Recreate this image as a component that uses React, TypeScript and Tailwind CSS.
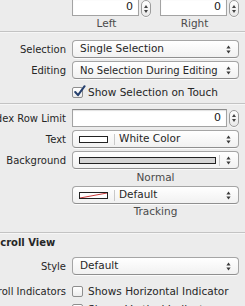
import React from "react";

function Arrows() {
  return (
    <svg width="5" height="9" viewBox="0 0 5 9" className="shrink-0">
      <path d="M2.5 0.5 L4.6 3.4 L0.4 3.4 Z" fill="#3a3a3a" />
      <path d="M2.5 8.5 L4.6 5.6 L0.4 5.6 Z" fill="#3a3a3a" />
    </svg>
  );
}

function Stepper() {
  return (
    <div className="flex h-[17px] w-[10px] shrink-0 flex-col items-center justify-center gap-[2px] rounded-full border border-[#9c9c9c] bg-gradient-to-b from-white to-[#e9e9e9] shadow-[0_1px_0_rgba(255,255,255,0.7)]">
      <svg width="4" height="3" viewBox="0 0 4 3">
        <path d="M2 0 L4 3 L0 3 Z" fill="#444" />
      </svg>
      <svg width="4" height="3" viewBox="0 0 4 3">
        <path d="M2 3 L4 0 L0 0 Z" fill="#444" />
      </svg>
    </div>
  );
}

function Field({ value }: { value: string }) {
  return (
    <div className="flex h-[18px] flex-1 items-center justify-end border border-[#a3a3a3] border-t-[#8c8c8c] bg-white pr-[5px] text-[11px] text-[#1a1a1a] shadow-[inset_0_1px_1px_rgba(0,0,0,0.12)]">
      {value}
    </div>
  );
}

function Popup({ children, arrowsLeftLine }: { children: React.ReactNode; arrowsLeftLine?: boolean }) {
  return (
    <div className="flex h-[18px] w-full items-center rounded-[4px] border border-[#a5a5a5] border-b-[#8f8f8f] bg-gradient-to-b from-white to-[#f1f1f1] pr-[7px] shadow-[0_1px_0_rgba(255,255,255,0.8)]">
      <div className="flex min-w-0 flex-1 items-center">{children}</div>
      {arrowsLeftLine && <div className="mr-[6px] h-[11px] w-px bg-[#c9c9c9]" />}
      <Arrows />
    </div>
  );
}

function Check({ checked }: { checked?: boolean }) {
  return (
    <div className="relative h-[11px] w-[11px] shrink-0 rounded-[2px] border border-[#8e8e8e] bg-gradient-to-b from-white to-[#ececec]">
      {checked && (
        <svg width="13" height="13" viewBox="0 0 13 13" className="absolute left-[0px] top-[-3px]">
          <path d="M2.2 7 L5 10.2 L11.6 1.2" fill="none" stroke="#26406e" strokeWidth="2" strokeLinecap="round" strokeLinejoin="round" />
        </svg>
      )}
    </div>
  );
}

function Row({ label, children, className = "" }: { label?: string; children: React.ReactNode; className?: string }) {
  return (
    <div className={`grid grid-cols-[66px_167px] items-center gap-x-[6px] ${className}`}>
      <div className="flex justify-end whitespace-nowrap text-[10px] text-[#262626]">{label}</div>
      <div className="flex items-center">{children}</div>
    </div>
  );
}

function Separator({ className = "" }: { className?: string }) {
  return <div className={`h-[2px] w-full border-t border-[#c3c3c3] border-b-0 bg-[#f6f6f6] ${className}`} />;
}

function Swatch({ wide, red }: { wide?: boolean; red?: boolean }) {
  return (
    <div
      className={`relative ml-[6px] h-[7px] shrink-0 overflow-hidden border border-[#222] ${
        wide ? "w-[137px] bg-[#d5d5d5]" : "w-[29px] bg-white"
      }`}
    >
      {red && (
        <svg width="27" height="5" viewBox="0 0 27 5" className="absolute left-0 top-0">
          <path d="M0 5 L27 0" stroke="#c83a3a" strokeWidth="1" />
        </svg>
      )}
    </div>
  );
}

export default function App() {
  return (
    <div
      className="h-[306px] w-[245px] overflow-hidden bg-[#ececec] text-[#262626]"
      style={{ fontFamily: '"DejaVu Sans", "Lucida Grande", sans-serif' }}
    >
      {/* inset fields: left / right */}
      <div className="mt-[-2px] grid h-[19px] grid-cols-[66px_167px] gap-x-[6px]">
        <div />
        <div className="flex">
          <div className="flex w-[79px] items-start gap-[2px]">
            <Field value="0" />
            <div className="mt-[2px]">
              <Stepper />
            </div>
          </div>
          <div className="ml-[9px] flex w-[79px] items-start gap-[2px]">
            <Field value="0" />
            <div className="mt-[2px]">
              <Stepper />
            </div>
          </div>
        </div>
      </div>
      <div className="grid h-[12px] grid-cols-[66px_167px] gap-x-[6px] text-[10.5px] leading-[12px] text-[#4a4a4a]">
        <div />
        <div className="flex">
          <div className="w-[69px] text-center">Left</div>
          <div className="ml-[19px] w-[69px] text-center">Right</div>
        </div>
      </div>

      <Separator className="mt-[2px]" />

      <Row label="Selection" className="mt-[7px] h-[18px]">
        <Popup>
          <span className="pl-[7px] text-[10.5px]">Single Selection</span>
        </Popup>
      </Row>
      <Row label="Editing" className="mt-[3px] h-[18px]">
        <Popup>
          <span className="whitespace-nowrap pl-[7px] text-[10px]">No Selection During Editing</span>
        </Popup>
      </Row>
      <Row className="mt-[6px] h-[14px]">
        <div className="flex items-center gap-[5px]">
          <Check checked />
          <span className="whitespace-nowrap text-[10.5px]">Show Selection on Touch</span>
        </div>
      </Row>

      <Separator className="mt-[4px]" />

      <Row label="Index Row Limit" className="mt-[4px] h-[18px]">
        <div className="flex w-full items-center gap-[2px]">
          <Field value="0" />
          <Stepper />
        </div>
      </Row>
      <Row label="Text" className="mt-[3px] h-[18px]">
        <Popup>
          <Swatch />
          <div className="ml-[6px] h-[11px] w-px bg-[#c9c9c9]" />
          <span className="pl-[4px] text-[10.5px]">White Color</span>
        </Popup>
      </Row>
      <Row label="Background" className="mt-[3px] h-[18px]">
        <Popup arrowsLeftLine>
          <Swatch wide />
        </Popup>
      </Row>
      <div className="mt-[2px] grid h-[12px] grid-cols-[66px_167px] gap-x-[6px] text-[10.5px] leading-[12px] text-[#4a4a4a]">
        <div />
        <div className="text-center">Normal</div>
      </div>
      <Row className="mt-[3px] h-[18px]">
        <Popup>
          <Swatch red />
          <div className="ml-[6px] h-[11px] w-px bg-[#c9c9c9]" />
          <span className="pl-[4px] text-[10.5px]">Default</span>
        </Popup>
      </Row>
      <div className="mt-[1px] grid h-[12px] grid-cols-[66px_167px] gap-x-[6px] text-[10.5px] leading-[12px] text-[#4a4a4a]">
        <div />
        <div className="text-center">Tracking</div>
      </div>

      <Separator className="mt-[15px]" />

      <div className="ml-[-7px] mt-[3px] h-[12px] text-[10px] font-bold leading-[12px]">Scroll View</div>

      <Row label="Style" className="mt-[8px] h-[18px]">
        <Popup>
          <span className="pl-[7px] text-[10.5px]">Default</span>
        </Popup>
      </Row>
      <Row label="Scroll Indicators" className="mt-[9px] h-[14px]">
        <div className="flex items-center gap-[5px]">
          <Check />
          <span className="whitespace-nowrap text-[10.5px]">Shows Horizontal Indicator</span>
        </div>
      </Row>
      <Row className="mt-[4px] h-[14px]">
        <div className="flex items-center gap-[5px]">
          <Check />
          <span className="whitespace-nowrap text-[10.5px]">Shows Vertical Indicator</span>
        </div>
      </Row>
    </div>
  );
}
